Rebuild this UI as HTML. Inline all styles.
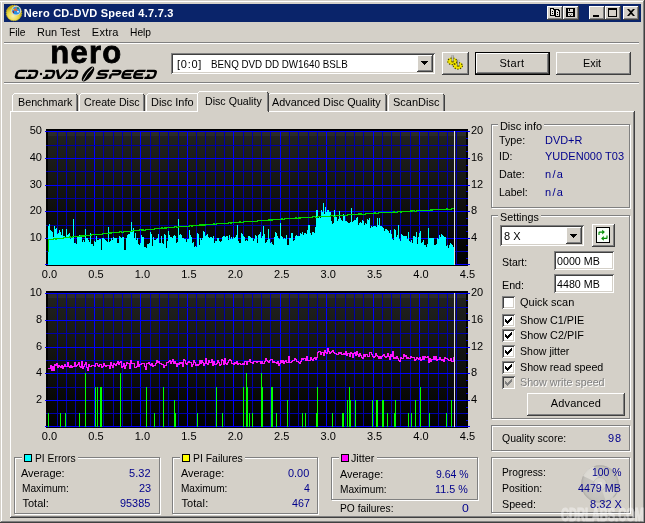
<!DOCTYPE html>
<html><head><meta charset="utf-8"><title>Nero CD-DVD Speed 4.7.7.3</title>
<style>
html,body{margin:0;padding:0;background:#d4d0c8;overflow:hidden}
#w{position:relative;width:645px;height:523px;overflow:hidden;will-change:transform;font-family:"Liberation Sans",sans-serif;font-size:11px;line-height:13px}
#w div,#w span.t,#w svg{position:absolute}
#w span.t{white-space:nowrap;line-height:13px}
</style></head><body><div id="w">
<div style="left:0px;top:0px;width:645px;height:523px;background:#d4d0c8;"></div>
<div style="left:0px;top:1px;width:644px;height:1px;background:#fff;"></div>
<div style="left:1px;top:1px;width:1px;height:521px;background:#fff;"></div>
<div style="left:643px;top:1px;width:1px;height:521px;background:#808080;"></div>
<div style="left:1px;top:521px;width:643px;height:1px;background:#808080;"></div>
<div style="left:644px;top:0px;width:1px;height:523px;background:#404040;"></div>
<div style="left:0px;top:522px;width:645px;height:1px;background:#404040;"></div>
<div style="left:4px;top:4px;width:637px;height:18px;background:#0a246a;"></div>
<svg style="left:5px;top:4px" width="19" height="18" viewBox="5 4 19 18">
<defs><radialGradient id="ig" cx="13" cy="16" r="9" gradientUnits="userSpaceOnUse"><stop offset="0" stop-color="#f8f0b0"/><stop offset=".55" stop-color="#ecdc50"/><stop offset="1" stop-color="#c4ae10"/></radialGradient></defs>
<circle cx="14" cy="13" r="7.700" fill="url(#ig)" stroke="#d8c420" stroke-width="1" stroke-dasharray="1.400 1"/>
<circle cx="16.200" cy="10.600" r="4.900" fill="#d4d4dc"/>
<circle cx="16.200" cy="10.600" r="3.900" fill="#2890e0"/>
<path d="M13.500 9.500l1.500-.5.800-1.800 1 .3-.3 1.800 1.500 1.500-.8.800-1.600-1.200-1.500.6z" fill="#f06030"/>
<path d="M17.200 7.200l1.800.6-.4 1.200-1.600-.6z" fill="#208030"/>
<path d="M13 10.500l1.200 1.800-.7.900-1-1.400z" fill="#a01010"/>
<circle cx="13.300" cy="9.200" r=".7" fill="#f0e020"/>
<circle cx="18" cy="11.700" r=".9" fill="#f4f8ff"/>
</svg>
<span class="t" style="top:6.7px;color:#fff;font-size:11px;font-weight:bold;letter-spacing:0.25px;left:23.8px;">Nero CD-DVD Speed 4.7.7.3</span>
<div style="left:547px;top:6px;width:16px;height:14px;background:#d4d0c8;box-shadow:inset -1px -1px 0 #404040, inset 1px 1px 0 #fff, inset -2px -2px 0 #808080, inset 2px 2px 0 #d4d0c8;"></div>
<svg style="left:547px;top:6px" width="16" height="14" viewBox="0 0 16 14" shape-rendering="crispEdges"><path d="M3 2h4v1h1v7h-5z" fill="#000"/><path d="M4 3h2v1h1v5h-3z" fill="#e8e6e0"/><path d="M8 3h4v1h1v7h-5z" fill="#000"/><path d="M9 4h2v1h1v5h-3z" fill="#e8e6e0"/><path d="M5 5h1v1h-1zM5 7h1v1h-1zM10 6h1v1h-1zM10 8h1v1h-1z" fill="#000"/></svg>
<div style="left:563px;top:6px;width:16px;height:14px;background:#d4d0c8;box-shadow:inset -1px -1px 0 #404040, inset 1px 1px 0 #fff, inset -2px -2px 0 #808080, inset 2px 2px 0 #d4d0c8;"></div>
<svg style="left:563px;top:6px" width="16" height="14" viewBox="0 0 16 14" shape-rendering="crispEdges"><path d="M3 2h9v9h-9z" fill="#000"/><path d="M5 3h5v3h-5z" fill="#dcdad4"/><path d="M6 3h1v2h-1z" fill="#000"/><path d="M5 7h5v3h-5z" fill="#dcdad4"/><path d="M6 8h1v1h-1zM8 8h1v1h-1z" fill="#707070"/><path d="M7 9h1v1h-1z" fill="#303030"/></svg>
<div style="left:589px;top:6px;width:16px;height:14px;background:#d4d0c8;box-shadow:inset -1px -1px 0 #404040, inset 1px 1px 0 #fff, inset -2px -2px 0 #808080, inset 2px 2px 0 #d4d0c8;"></div>
<svg style="left:589px;top:6px" width="16" height="14" viewBox="0 0 16 14" shape-rendering="crispEdges"><path d="M4 9h6v2h-6z" fill="#000"/></svg>
<div style="left:605px;top:6px;width:16px;height:14px;background:#d4d0c8;box-shadow:inset -1px -1px 0 #404040, inset 1px 1px 0 #fff, inset -2px -2px 0 #808080, inset 2px 2px 0 #d4d0c8;"></div>
<svg style="left:605px;top:6px" width="16" height="14" viewBox="0 0 16 14" shape-rendering="crispEdges"><path d="M3 2h9v9h-9z" fill="#000"/><path d="M4 4h7v6h-7z" fill="#d4d0c8"/></svg>
<div style="left:623px;top:6px;width:16px;height:14px;background:#d4d0c8;box-shadow:inset -1px -1px 0 #404040, inset 1px 1px 0 #fff, inset -2px -2px 0 #808080, inset 2px 2px 0 #d4d0c8;"></div>
<svg style="left:623px;top:6px" width="16" height="14" viewBox="0 0 16 14" shape-rendering="crispEdges"><path d="M4 3h2l2 2 2-2h2l-3 3.5 3 3.5h-2l-2-2-2 2h-2l3-3.5z" fill="#000" shape-rendering="auto"/></svg>
<span class="t" style="top:25.7px;color:#000;font-size:11px;left:9.4px;transform:scaleX(0.933);transform-origin:0 0;">File</span>
<span class="t" style="top:25.7px;color:#000;font-size:11px;left:37.4px;transform:scaleX(0.994);transform-origin:0 0;">Run Test</span>
<span class="t" style="top:25.7px;color:#000;font-size:11px;letter-spacing:0.25px;left:91.8px;">Extra</span>
<span class="t" style="top:25.7px;color:#000;font-size:11px;left:130.3px;transform:scaleX(0.929);transform-origin:0 0;">Help</span>
<div style="left:4px;top:42px;width:635px;height:1px;background:#808080;"></div>
<div style="left:4px;top:43px;width:635px;height:1px;background:#fff;"></div>
<div style="left:4px;top:82px;width:635px;height:1px;background:#808080;"></div>
<div style="left:4px;top:83px;width:635px;height:1px;background:#fff;"></div>
<span class="t" style="left:50.200px;top:35px;font-size:31px;font-weight:bold;letter-spacing:1.300px;line-height:36px;color:#000;-webkit-text-stroke:.8px #000">nero</span>
<svg style="left:10px;top:66px" width="155" height="18" viewBox="10 66 155 18"><g fill="none" stroke="#000" stroke-width="2.350"><path transform="translate(17.0 69.800) skewX(-18) scale(1.060 1)" d="M10 1H3.500Q1 1 1 3.500V5.500Q1 8 3.500 8H10"/><path transform="translate(28.5 69.800) skewX(-18) scale(1.060 1)" d="M0 1H6.500Q9 1 9 3.500V5.500Q9 8 6.500 8H0M3 4.500V8"/><path transform="translate(45.5 69.800) skewX(-18) scale(1.060 1)" d="M0 1H6.500Q9 1 9 3.500V5.500Q9 8 6.500 8H0M3 4.500V8"/><path transform="translate(56.7 69.800) skewX(-18) scale(1.060 1)" d="M0.500 0L4.500 8H6L10 0"/><path transform="translate(68.5 69.800) skewX(-18) scale(1.060 1)" d="M0 1H6.500Q9 1 9 3.500V5.500Q9 8 6.500 8H0M3 4.500V8"/><path transform="translate(98.7 69.800) skewX(-18) scale(1.060 1)" d="M10 1H3Q1 1 1 2.800Q1 4.500 3 4.500H7Q9 4.500 9 6.200Q9 8 7 8H0"/><path transform="translate(111.5 69.800) skewX(-18) scale(1.060 1)" d="M1 9V4.500M1 1H7Q9 1 9 2.800Q9 4.500 7 4.500H1"/><path transform="translate(123.5 69.800) skewX(-18) scale(1.060 1)" d="M10 1H3.500Q1 1 1 3.500V5.500Q1 8 3.500 8H10M1 4.500H8.500"/><path transform="translate(135.2 69.800) skewX(-18) scale(1.060 1)" d="M10 1H3.500Q1 1 1 3.500V5.500Q1 8 3.500 8H10M1 4.500H8.500"/><path transform="translate(147.1 69.800) skewX(-18) scale(1.060 1)" d="M0 1H6.500Q9 1 9 3.500V5.500Q9 8 6.500 8H0M3 4.500V8"/></g><circle cx="41" cy="74" r="1.200" fill="#000"/><g transform="translate(88 74) rotate(-52)"><ellipse cx="0" cy="0" rx="9" ry="3.600" fill="#000"/><path d="M-8 0.300Q0 -1.200 8 0" stroke="#d4d0c8" stroke-width="1" fill="none"/></g></svg>
<div style="left:171px;top:53px;width:264px;height:21px;background:#fff;box-shadow:inset 1px 1px 0 #808080, inset -1px -1px 0 #fff, inset 2px 2px 0 #404040, inset -2px -2px 0 #d4d0c8;"></div>
<span class="t" style="top:57.7px;color:#000;font-size:11px;letter-spacing:0.72px;left:177.1px;">[0:0]</span>
<span class="t" style="top:57.7px;color:#000;font-size:11px;left:210.5px;transform:scaleX(0.891);transform-origin:0 0;">BENQ DVD DD DW1640 BSLB</span>
<div style="left:417px;top:55px;width:16px;height:17px;background:#d4d0c8;box-shadow:inset -1px -1px 0 #404040, inset 1px 1px 0 #fff, inset -2px -2px 0 #808080, inset 2px 2px 0 #d4d0c8;"></div>
<svg style="left:417px;top:55px" width="16" height="17" viewBox="0 0 16 17" shape-rendering="crispEdges"><path d="M4 6h7v1h-1v1h-1v1h-1v1h-1v-1h-1v-1h-1v-1h-1z" fill="#000"/></svg>
<div style="left:442px;top:52px;width:27px;height:23px;background:#d4d0c8;box-shadow:inset -1px -1px 0 #404040, inset 1px 1px 0 #fff, inset -2px -2px 0 #808080, inset 2px 2px 0 #d4d0c8;"></div>
<svg style="left:444px;top:53px" width="23" height="20" viewBox="444 53 23 20">
<g fill="#f4e800"><ellipse cx="452.300" cy="61.200" rx="4.900" ry="3.700"/><ellipse cx="457.900" cy="65.600" rx="4.900" ry="3.700"/></g>
<g fill="none" stroke="#4a4400" stroke-width="1.300" stroke-dasharray="1.200 1.500"><ellipse cx="452.300" cy="61.400" rx="4.500" ry="3.300"/><ellipse cx="457.900" cy="65.800" rx="4.500" ry="3.300"/></g>
<g fill="#8a7c00"><ellipse cx="452.600" cy="61.600" rx="1.700" ry="1.100"/><ellipse cx="458.200" cy="66" rx="1.700" ry="1.100"/></g>
<rect x="451.600" y="55.300" width="2" height="5.800" fill="#707070"/><rect x="452.300" y="55.300" width=".8" height="5.500" fill="#e0e0e0"/>
<rect x="457.200" y="59.800" width="2" height="5.800" fill="#707070"/><rect x="457.900" y="59.800" width=".8" height="5.500" fill="#e0e0e0"/>
</svg>
<div style="left:475px;top:52px;width:75px;height:23px;background:#000;"></div>
<div style="left:476px;top:53px;width:73px;height:21px;background:#d4d0c8;box-shadow:inset -1px -1px 0 #404040, inset 1px 1px 0 #fff, inset -2px -2px 0 #808080, inset 2px 2px 0 #d4d0c8;"></div>
<span class="t" style="top:56.7px;color:#000;font-size:11px;letter-spacing:0.36px;left:499.4px;">Start</span>
<div style="left:556px;top:52px;width:75px;height:23px;background:#d4d0c8;box-shadow:inset -1px -1px 0 #404040, inset 1px 1px 0 #fff, inset -2px -2px 0 #808080, inset 2px 2px 0 #d4d0c8;"></div>
<span class="t" style="top:56.7px;color:#000;font-size:11px;left:583.1px;transform:scaleX(0.986);transform-origin:0 0;">Exit</span>
<div style="left:10px;top:111px;width:624px;height:1px;background:#fff;"></div>
<div style="left:10px;top:111px;width:1px;height:406px;background:#fff;"></div>
<div style="left:634px;top:111px;width:1px;height:407px;background:#404040;"></div>
<div style="left:10px;top:517px;width:625px;height:1px;background:#404040;"></div>
<div style="left:633px;top:112px;width:1px;height:405px;background:#808080;"></div>
<div style="left:11px;top:516px;width:623px;height:1px;background:#808080;"></div>
<div style="left:12px;top:95px;width:1px;height:16px;background:#fff;"></div>
<div style="left:13px;top:94px;width:1px;height:1px;background:#fff;"></div>
<div style="left:14px;top:93px;width:62px;height:1px;background:#fff;"></div>
<div style="left:77px;top:95px;width:1px;height:16px;background:#404040;"></div>
<div style="left:76px;top:94px;width:1px;height:1px;background:#404040;"></div>
<div style="left:76px;top:95px;width:1px;height:16px;background:#808080;"></div>
<span class="t" style="top:95.7px;color:#000;font-size:11px;left:18.1px;transform:scaleX(0.977);transform-origin:0 0;">Benchmark</span>
<div style="left:79px;top:95px;width:1px;height:16px;background:#fff;"></div>
<div style="left:80px;top:94px;width:1px;height:1px;background:#fff;"></div>
<div style="left:81px;top:93px;width:62px;height:1px;background:#fff;"></div>
<div style="left:144px;top:95px;width:1px;height:16px;background:#404040;"></div>
<div style="left:143px;top:94px;width:1px;height:1px;background:#404040;"></div>
<div style="left:143px;top:95px;width:1px;height:16px;background:#808080;"></div>
<span class="t" style="top:95.7px;color:#000;font-size:11px;left:83.9px;transform:scaleX(0.967);transform-origin:0 0;">Create Disc</span>
<div style="left:146px;top:95px;width:1px;height:16px;background:#fff;"></div>
<div style="left:147px;top:94px;width:1px;height:1px;background:#fff;"></div>
<div style="left:148px;top:93px;width:50px;height:1px;background:#fff;"></div>
<div style="left:199px;top:95px;width:1px;height:16px;background:#404040;"></div>
<div style="left:198px;top:94px;width:1px;height:1px;background:#404040;"></div>
<div style="left:198px;top:95px;width:1px;height:16px;background:#808080;"></div>
<span class="t" style="top:95.7px;color:#000;font-size:11px;left:150.9px;transform:scaleX(0.995);transform-origin:0 0;">Disc Info</span>
<div style="left:268px;top:95px;width:1px;height:16px;background:#fff;"></div>
<div style="left:269px;top:94px;width:1px;height:1px;background:#fff;"></div>
<div style="left:270px;top:93px;width:115px;height:1px;background:#fff;"></div>
<div style="left:386px;top:95px;width:1px;height:16px;background:#404040;"></div>
<div style="left:385px;top:94px;width:1px;height:1px;background:#404040;"></div>
<div style="left:385px;top:95px;width:1px;height:16px;background:#808080;"></div>
<span class="t" style="top:95.7px;color:#000;font-size:11px;left:272.4px;transform:scaleX(0.983);transform-origin:0 0;">Advanced Disc Quality</span>
<div style="left:388px;top:95px;width:1px;height:16px;background:#fff;"></div>
<div style="left:389px;top:94px;width:1px;height:1px;background:#fff;"></div>
<div style="left:390px;top:93px;width:53px;height:1px;background:#fff;"></div>
<div style="left:444px;top:95px;width:1px;height:16px;background:#404040;"></div>
<div style="left:443px;top:94px;width:1px;height:1px;background:#404040;"></div>
<div style="left:443px;top:95px;width:1px;height:16px;background:#808080;"></div>
<span class="t" style="top:95.7px;color:#000;font-size:11px;left:393.2px;transform:scaleX(0.998);transform-origin:0 0;">ScanDisc</span>
<div style="left:197px;top:91px;width:72px;height:21px;background:#d4d0c8;"></div>
<div style="left:197px;top:93px;width:1px;height:19px;background:#fff;"></div>
<div style="left:198px;top:92px;width:1px;height:1px;background:#fff;"></div>
<div style="left:199px;top:91px;width:68px;height:1px;background:#fff;"></div>
<div style="left:268px;top:93px;width:1px;height:19px;background:#404040;"></div>
<div style="left:267px;top:92px;width:1px;height:1px;background:#404040;"></div>
<div style="left:267px;top:93px;width:1px;height:18px;background:#808080;"></div>
<span class="t" style="top:94.7px;color:#000;font-size:11px;left:204.9px;transform:scaleX(0.967);transform-origin:0 0;">Disc Quality</span>
<svg style="left:0;top:0" width="645" height="523" viewBox="0 0 645 523"><defs><linearGradient id="g131" x1="0" y1="0" x2="0" y2="1"><stop offset="0" stop-color="#222320"/><stop offset="1" stop-color="#000"/></linearGradient></defs><rect x="46" y="129" width="422" height="137" fill="#000" shape-rendering="crispEdges"/><rect x="48" y="131" width="418" height="134" fill="url(#g131)" shape-rendering="crispEdges"/><rect x="48" y="132" width="418" height="4" fill="#2b2b2a" shape-rendering="crispEdges"/><g shape-rendering="crispEdges"><rect x="57" y="131" width="1" height="134" fill="#0000a8"/><rect x="66" y="131" width="1" height="134" fill="#0000a8"/><rect x="75" y="131" width="1" height="134" fill="#0000a8"/><rect x="85" y="131" width="1" height="134" fill="#0000a8"/><rect x="94" y="131" width="1" height="134" fill="#0000ff"/><rect x="103" y="131" width="1" height="134" fill="#0000a8"/><rect x="113" y="131" width="1" height="134" fill="#0000a8"/><rect x="122" y="131" width="1" height="134" fill="#0000a8"/><rect x="131" y="131" width="1" height="134" fill="#0000a8"/><rect x="140" y="131" width="1" height="134" fill="#0000ff"/><rect x="150" y="131" width="1" height="134" fill="#0000a8"/><rect x="159" y="131" width="1" height="134" fill="#0000a8"/><rect x="168" y="131" width="1" height="134" fill="#0000a8"/><rect x="178" y="131" width="1" height="134" fill="#0000a8"/><rect x="187" y="131" width="1" height="134" fill="#0000ff"/><rect x="196" y="131" width="1" height="134" fill="#0000a8"/><rect x="205" y="131" width="1" height="134" fill="#0000a8"/><rect x="215" y="131" width="1" height="134" fill="#0000a8"/><rect x="224" y="131" width="1" height="134" fill="#0000a8"/><rect x="233" y="131" width="1" height="134" fill="#0000ff"/><rect x="243" y="131" width="1" height="134" fill="#0000a8"/><rect x="252" y="131" width="1" height="134" fill="#0000a8"/><rect x="261" y="131" width="1" height="134" fill="#0000a8"/><rect x="270" y="131" width="1" height="134" fill="#0000a8"/><rect x="280" y="131" width="1" height="134" fill="#0000ff"/><rect x="289" y="131" width="1" height="134" fill="#0000a8"/><rect x="298" y="131" width="1" height="134" fill="#0000a8"/><rect x="308" y="131" width="1" height="134" fill="#0000a8"/><rect x="317" y="131" width="1" height="134" fill="#0000a8"/><rect x="326" y="131" width="1" height="134" fill="#0000ff"/><rect x="335" y="131" width="1" height="134" fill="#0000a8"/><rect x="345" y="131" width="1" height="134" fill="#0000a8"/><rect x="354" y="131" width="1" height="134" fill="#0000a8"/><rect x="363" y="131" width="1" height="134" fill="#0000a8"/><rect x="373" y="131" width="1" height="134" fill="#0000ff"/><rect x="382" y="131" width="1" height="134" fill="#0000a8"/><rect x="391" y="131" width="1" height="134" fill="#0000a8"/><rect x="400" y="131" width="1" height="134" fill="#0000a8"/><rect x="410" y="131" width="1" height="134" fill="#0000a8"/><rect x="419" y="131" width="1" height="134" fill="#0000ff"/><rect x="428" y="131" width="1" height="134" fill="#0000a8"/><rect x="438" y="131" width="1" height="134" fill="#0000a8"/><rect x="447" y="131" width="1" height="134" fill="#0000a8"/><rect x="456" y="131" width="1" height="134" fill="#0000a8"/><rect x="45" y="131" width="425" height="1" fill="#0000ff"/><rect x="46" y="145" width="421" height="1" fill="#0000a8"/><rect x="45" y="158" width="425" height="1" fill="#0000ff"/><rect x="46" y="171" width="421" height="1" fill="#0000a8"/><rect x="45" y="185" width="425" height="1" fill="#0000ff"/><rect x="46" y="198" width="421" height="1" fill="#0000a8"/><rect x="45" y="211" width="425" height="1" fill="#0000ff"/><rect x="46" y="225" width="421" height="1" fill="#0000a8"/><rect x="45" y="238" width="425" height="1" fill="#0000ff"/><rect x="46" y="251" width="421" height="1" fill="#0000a8"/><rect x="45" y="264" width="425" height="1" fill="#0000ff"/><rect x="466" y="131" width="2" height="1" fill="#0000e0"/><rect x="466" y="138" width="2" height="1" fill="#0000e0"/><rect x="466" y="145" width="2" height="1" fill="#0000e0"/><rect x="466" y="151" width="2" height="1" fill="#0000e0"/><rect x="466" y="158" width="2" height="1" fill="#0000e0"/><rect x="466" y="165" width="2" height="1" fill="#0000e0"/><rect x="466" y="171" width="2" height="1" fill="#0000e0"/><rect x="466" y="178" width="2" height="1" fill="#0000e0"/><rect x="466" y="185" width="2" height="1" fill="#0000e0"/><rect x="466" y="191" width="2" height="1" fill="#0000e0"/><rect x="466" y="198" width="2" height="1" fill="#0000e0"/><rect x="466" y="205" width="2" height="1" fill="#0000e0"/><rect x="466" y="211" width="2" height="1" fill="#0000e0"/><rect x="466" y="218" width="2" height="1" fill="#0000e0"/><rect x="466" y="225" width="2" height="1" fill="#0000e0"/><rect x="466" y="231" width="2" height="1" fill="#0000e0"/><rect x="466" y="238" width="2" height="1" fill="#0000e0"/><rect x="466" y="245" width="2" height="1" fill="#0000e0"/><rect x="466" y="251" width="2" height="1" fill="#0000e0"/><rect x="466" y="258" width="2" height="1" fill="#0000e0"/><rect x="466" y="264" width="2" height="1" fill="#0000e0"/></g><path d="M48 265V225.8h1V224.3h1V230.1h1V230.8h1V232.0h1V237.3h1V226.4h1V228.6h1V228.0h1V234.2h1V233.4h1V230.3h1V231.6h1V234.5h1V229.2h1V235.7h1V235.9h1V237.3h1V229.3h1V234.5h1V233.8h1V232.8h1V238.8h1V236.5h1V235.8h1V218.8h1V243.1h1V243.4h1V244.3h1V236.2h1V236.1h1V234.8h1V235.5h1V235.8h1V242.1h1V240.4h1V241.5h1V229.1h1V237.5h1V238.1h1V239.8h1V241.7h1V232.6h1V243.7h1V244.4h1V246.4h1V241.0h1V242.0h1V235.8h1V239.5h1V240.3h1V239.1h1V239.3h1V249.9h1V237.8h1V238.1h1V238.9h1V239.6h1V240.8h1V242.3h1V227.4h1V241.6h1V240.7h1V238.4h1V239.8h1V237.4h1V238.4h1V238.2h1V238.1h1V243.0h1V243.1h1V236.3h1V237.1h1V238.4h1V237.3h1V236.6h1V250.3h1V250.3h1V237.8h1V235.2h1V234.2h1V234.3h1V231.3h1V222.3h1V230.9h1V227.8h1V238.0h1V233.4h1V240.0h1V237.7h1V243.6h1V245.0h1V243.1h1V234.6h1V236.9h1V236.6h1V247.1h1V247.4h1V247.9h1V243.6h1V244.1h1V243.0h1V232.1h1V233.5h1V245.8h1V236.8h1V240.4h1V240.0h1V238.6h1V237.9h1V234.2h1V242.5h1V243.4h1V235.7h1V243.2h1V244.2h1V234.3h1V235.3h1V247.6h1V241.3h1V231.3h1V235.4h1V237.1h1V237.1h1V237.5h1V235.6h1V235.4h1V235.9h1V242.7h1V242.0h1V218.8h1V235.1h1V234.0h1V235.0h1V237.6h1V237.7h1V238.7h1V239.1h1V241.5h1V239.1h1V238.5h1V230.0h1V235.1h1V237.2h1V242.6h1V242.1h1V247.3h1V245.7h1V246.5h1V233.3h1V233.5h1V244.8h1V238.1h1V240.4h1V237.6h1V231.0h1V231.9h1V236.0h1V235.2h1V233.9h1V237.2h1V237.9h1V236.6h1V236.8h1V237.7h1V235.5h1V242.7h1V240.9h1V241.4h1V238.3h1V237.8h1V241.1h1V242.2h1V240.9h1V237.4h1V236.4h1V236.2h1V237.4h1V235.7h1V236.1h1V239.5h1V235.1h1V239.4h1V237.4h1V238.5h1V236.5h1V238.4h1V237.3h1V235.2h1V224.7h1V241.3h1V242.8h1V243.4h1V233.4h1V233.9h1V236.4h1V237.0h1V241.2h1V240.0h1V240.8h1V235.7h1V235.5h1V237.2h1V238.1h1V237.5h1V241.4h1V238.9h1V235.2h1V235.8h1V242.5h1V235.0h1V233.8h1V231.9h1V238.1h1V235.6h1V226.1h1V233.9h1V243.0h1V241.8h1V240.0h1V228.8h1V238.5h1V243.2h1V241.7h1V244.1h1V244.5h1V237.2h1V232.3h1V233.0h1V235.8h1V237.9h1V238.5h1V223.3h1V236.1h1V237.0h1V238.9h1V238.1h1V238.5h1V235.3h1V244.5h1V245.1h1V237.6h1V238.0h1V233.3h1V233.1h1V240.9h1V240.1h1V236.0h1V235.2h1V236.3h1V236.2h1V236.0h1V233.2h1V233.7h1V232.2h1V235.3h1V232.9h1V232.7h1V234.2h1V229.7h1V225.4h1V225.1h1V233.1h1V234.7h1V232.0h1V231.9h1V233.4h1V227.2h1V209.7h1V209.5h1V218.0h1V215.5h1V218.0h1V210.0h1V211.6h1V202.8h1V213.6h1V207.0h1V211.5h1V209.5h1V210.3h1V212.1h1V212.4h1V221.1h1V223.9h1V223.1h1V209.5h1V216.0h1V216.8h1V220.7h1V219.3h1V210.9h1V218.4h1V219.5h1V220.9h1V214.2h1V214.8h1V220.7h1V221.4h1V221.7h1V223.0h1V222.8h1V221.6h1V208.1h1V222.2h1V220.8h1V220.0h1V220.2h1V217.9h1V217.4h1V224.6h1V223.0h1V222.2h1V223.3h1V220.1h1V221.1h1V224.6h1V223.3h1V224.1h1V219.2h1V219.7h1V218.4h1V227.5h1V226.2h1V227.4h1V226.4h1V226.3h1V225.9h1V227.2h1V218.0h1V225.0h1V218.2h1V225.7h1V226.4h1V226.8h1V228.1h1V231.2h1V228.8h1V229.1h1V230.0h1V231.4h1V233.4h1V229.7h1V234.2h1V239.4h1V240.4h1V229.4h1V229.5h1V237.1h1V235.4h1V224.5h1V239.2h1V240.8h1V234.1h1V235.1h1V235.7h1V235.6h1V236.4h1V236.3h1V238.6h1V232.2h1V241.3h1V241.8h1V240.0h1V242.5h1V236.3h1V236.1h1V237.2h1V232.1h1V243.7h1V236.7h1V232.9h1V231.4h1V242.6h1V241.5h1V239.9h1V244.7h1V244.8h1V246.8h1V243.7h1V227.7h1V238.3h1V237.5h1V237.5h1V237.5h1V238.0h1V244.5h1V245.4h1V244.1h1V238.3h1V238.8h1V234.7h1V236.8h1V233.9h1V234.8h1V236.4h1V236.5h1V236.8h1V245.7h1V245.1h1V248.0h1V244.5h1V243.2h1V243.9h1V244.8h1V247.2h1V248.3h1V265z" fill="#00ffff" shape-rendering="crispEdges"/><rect x="48" y="240" width="1" height="12" fill="#00d800" shape-rendering="crispEdges"/><g shape-rendering="crispEdges" fill="#00d800"><rect x="48" y="239" width="1" height="1"/><rect x="49" y="239" width="1" height="1"/><rect x="50" y="239" width="1" height="1"/><rect x="51" y="239" width="1" height="1"/><rect x="52" y="239" width="1" height="1"/><rect x="53" y="238" width="1" height="2"/><rect x="54" y="238" width="1" height="1"/><rect x="55" y="238" width="1" height="2"/><rect x="56" y="238" width="1" height="2"/><rect x="57" y="238" width="1" height="1"/><rect x="58" y="238" width="1" height="1"/><rect x="59" y="238" width="1" height="1"/><rect x="60" y="238" width="1" height="1"/><rect x="61" y="238" width="1" height="1"/><rect x="62" y="238" width="1" height="1"/><rect x="63" y="237" width="1" height="2"/><rect x="64" y="237" width="1" height="1"/><rect x="65" y="237" width="1" height="1"/><rect x="66" y="237" width="1" height="1"/><rect x="67" y="237" width="1" height="1"/><rect x="68" y="237" width="1" height="1"/><rect x="69" y="236" width="1" height="2"/><rect x="70" y="236" width="1" height="2"/><rect x="71" y="237" width="1" height="1"/><rect x="72" y="236" width="1" height="2"/><rect x="73" y="236" width="1" height="1"/><rect x="74" y="236" width="1" height="1"/><rect x="75" y="236" width="1" height="1"/><rect x="76" y="236" width="1" height="1"/><rect x="77" y="236" width="1" height="1"/><rect x="78" y="236" width="1" height="1"/><rect x="79" y="236" width="1" height="1"/><rect x="80" y="235" width="1" height="2"/><rect x="81" y="235" width="1" height="2"/><rect x="82" y="235" width="1" height="2"/><rect x="83" y="235" width="1" height="2"/><rect x="84" y="235" width="1" height="2"/><rect x="85" y="235" width="1" height="1"/><rect x="86" y="235" width="1" height="1"/><rect x="87" y="235" width="1" height="1"/><rect x="88" y="235" width="1" height="1"/><rect x="89" y="235" width="1" height="1"/><rect x="90" y="235" width="1" height="1"/><rect x="91" y="234" width="1" height="2"/><rect x="92" y="234" width="1" height="1"/><rect x="93" y="234" width="1" height="1"/><rect x="94" y="234" width="1" height="1"/><rect x="95" y="234" width="1" height="1"/><rect x="96" y="234" width="1" height="1"/><rect x="97" y="234" width="1" height="1"/><rect x="98" y="234" width="1" height="1"/><rect x="99" y="234" width="1" height="1"/><rect x="100" y="234" width="1" height="1"/><rect x="101" y="234" width="1" height="1"/><rect x="102" y="233" width="1" height="2"/><rect x="103" y="233" width="1" height="1"/><rect x="104" y="233" width="1" height="1"/><rect x="105" y="233" width="1" height="1"/><rect x="106" y="233" width="1" height="1"/><rect x="107" y="233" width="1" height="1"/><rect x="108" y="233" width="1" height="1"/><rect x="109" y="232" width="1" height="2"/><rect x="110" y="232" width="1" height="2"/><rect x="111" y="232" width="1" height="2"/><rect x="112" y="232" width="1" height="1"/><rect x="113" y="232" width="1" height="1"/><rect x="114" y="232" width="1" height="1"/><rect x="115" y="232" width="1" height="1"/><rect x="116" y="232" width="1" height="1"/><rect x="117" y="232" width="1" height="1"/><rect x="118" y="232" width="1" height="1"/><rect x="119" y="231" width="1" height="2"/><rect x="120" y="231" width="1" height="1"/><rect x="121" y="231" width="1" height="2"/><rect x="122" y="232" width="1" height="1"/><rect x="123" y="231" width="1" height="2"/><rect x="124" y="231" width="1" height="1"/><rect x="125" y="231" width="1" height="1"/><rect x="126" y="231" width="1" height="1"/><rect x="127" y="231" width="1" height="1"/><rect x="128" y="231" width="1" height="1"/><rect x="129" y="231" width="1" height="1"/><rect x="130" y="231" width="1" height="1"/><rect x="131" y="231" width="1" height="1"/><rect x="132" y="230" width="1" height="2"/><rect x="133" y="230" width="1" height="1"/><rect x="134" y="230" width="1" height="1"/><rect x="135" y="230" width="1" height="1"/><rect x="136" y="230" width="1" height="1"/><rect x="137" y="230" width="1" height="1"/><rect x="138" y="230" width="1" height="1"/><rect x="139" y="229" width="1" height="2"/><rect x="140" y="229" width="1" height="1"/><rect x="141" y="229" width="1" height="2"/><rect x="142" y="229" width="1" height="2"/><rect x="143" y="229" width="1" height="2"/><rect x="144" y="230" width="1" height="1"/><rect x="145" y="229" width="1" height="2"/><rect x="146" y="229" width="1" height="1"/><rect x="147" y="229" width="1" height="1"/><rect x="148" y="229" width="1" height="1"/><rect x="149" y="229" width="1" height="1"/><rect x="150" y="229" width="1" height="1"/><rect x="151" y="229" width="1" height="1"/><rect x="152" y="229" width="1" height="1"/><rect x="153" y="229" width="1" height="1"/><rect x="154" y="228" width="1" height="2"/><rect x="155" y="228" width="1" height="1"/><rect x="156" y="228" width="1" height="1"/><rect x="157" y="228" width="1" height="1"/><rect x="158" y="228" width="1" height="1"/><rect x="159" y="228" width="1" height="1"/><rect x="160" y="228" width="1" height="1"/><rect x="161" y="227" width="1" height="2"/><rect x="162" y="227" width="1" height="2"/><rect x="163" y="228" width="1" height="1"/><rect x="164" y="227" width="1" height="2"/><rect x="165" y="227" width="1" height="2"/><rect x="166" y="227" width="1" height="2"/><rect x="167" y="227" width="1" height="1"/><rect x="168" y="227" width="1" height="1"/><rect x="169" y="227" width="1" height="1"/><rect x="170" y="227" width="1" height="1"/><rect x="171" y="227" width="1" height="1"/><rect x="172" y="227" width="1" height="1"/><rect x="173" y="227" width="1" height="1"/><rect x="174" y="226" width="1" height="2"/><rect x="175" y="226" width="1" height="1"/><rect x="176" y="226" width="1" height="2"/><rect x="177" y="227" width="1" height="1"/><rect x="178" y="226" width="1" height="2"/><rect x="179" y="226" width="1" height="1"/><rect x="180" y="226" width="1" height="1"/><rect x="181" y="226" width="1" height="1"/><rect x="182" y="226" width="1" height="1"/><rect x="183" y="226" width="1" height="1"/><rect x="184" y="226" width="1" height="1"/><rect x="185" y="226" width="1" height="1"/><rect x="186" y="226" width="1" height="1"/><rect x="187" y="226" width="1" height="1"/><rect x="188" y="226" width="1" height="1"/><rect x="189" y="225" width="1" height="2"/><rect x="190" y="225" width="1" height="1"/><rect x="191" y="225" width="1" height="2"/><rect x="192" y="225" width="1" height="2"/><rect x="193" y="225" width="1" height="1"/><rect x="194" y="225" width="1" height="1"/><rect x="195" y="225" width="1" height="1"/><rect x="196" y="225" width="1" height="1"/><rect x="197" y="225" width="1" height="1"/><rect x="198" y="225" width="1" height="1"/><rect x="199" y="224" width="1" height="2"/><rect x="200" y="224" width="1" height="2"/><rect x="201" y="224" width="1" height="2"/><rect x="202" y="224" width="1" height="2"/><rect x="203" y="224" width="1" height="2"/><rect x="204" y="224" width="1" height="2"/><rect x="205" y="224" width="1" height="2"/><rect x="206" y="224" width="1" height="1"/><rect x="207" y="224" width="1" height="1"/><rect x="208" y="224" width="1" height="1"/><rect x="209" y="224" width="1" height="1"/><rect x="210" y="224" width="1" height="1"/><rect x="211" y="224" width="1" height="1"/><rect x="212" y="224" width="1" height="1"/><rect x="213" y="223" width="1" height="2"/><rect x="214" y="223" width="1" height="2"/><rect x="215" y="224" width="1" height="1"/><rect x="216" y="223" width="1" height="2"/><rect x="217" y="223" width="1" height="1"/><rect x="218" y="223" width="1" height="1"/><rect x="219" y="223" width="1" height="1"/><rect x="220" y="223" width="1" height="1"/><rect x="221" y="223" width="1" height="1"/><rect x="222" y="223" width="1" height="1"/><rect x="223" y="223" width="1" height="1"/><rect x="224" y="223" width="1" height="1"/><rect x="225" y="223" width="1" height="1"/><rect x="226" y="223" width="1" height="1"/><rect x="227" y="223" width="1" height="1"/><rect x="228" y="222" width="1" height="2"/><rect x="229" y="222" width="1" height="1"/><rect x="230" y="222" width="1" height="2"/><rect x="231" y="222" width="1" height="2"/><rect x="232" y="222" width="1" height="1"/><rect x="233" y="222" width="1" height="1"/><rect x="234" y="222" width="1" height="1"/><rect x="235" y="222" width="1" height="1"/><rect x="236" y="222" width="1" height="1"/><rect x="237" y="222" width="1" height="1"/><rect x="238" y="222" width="1" height="1"/><rect x="239" y="221" width="1" height="2"/><rect x="240" y="221" width="1" height="2"/><rect x="241" y="222" width="1" height="1"/><rect x="242" y="222" width="1" height="1"/><rect x="243" y="221" width="1" height="2"/><rect x="244" y="221" width="1" height="1"/><rect x="245" y="221" width="1" height="1"/><rect x="246" y="221" width="1" height="1"/><rect x="247" y="221" width="1" height="1"/><rect x="248" y="221" width="1" height="1"/><rect x="249" y="221" width="1" height="1"/><rect x="250" y="221" width="1" height="1"/><rect x="251" y="221" width="1" height="1"/><rect x="252" y="221" width="1" height="1"/><rect x="253" y="221" width="1" height="1"/><rect x="254" y="221" width="1" height="1"/><rect x="255" y="221" width="1" height="1"/><rect x="256" y="221" width="1" height="1"/><rect x="257" y="220" width="1" height="2"/><rect x="258" y="220" width="1" height="1"/><rect x="259" y="220" width="1" height="1"/><rect x="260" y="220" width="1" height="1"/><rect x="261" y="220" width="1" height="1"/><rect x="262" y="220" width="1" height="1"/><rect x="263" y="220" width="1" height="1"/><rect x="264" y="220" width="1" height="1"/><rect x="265" y="220" width="1" height="1"/><rect x="266" y="220" width="1" height="1"/><rect x="267" y="220" width="1" height="1"/><rect x="268" y="219" width="1" height="2"/><rect x="269" y="219" width="1" height="2"/><rect x="270" y="219" width="1" height="2"/><rect x="271" y="219" width="1" height="2"/><rect x="272" y="219" width="1" height="2"/><rect x="273" y="219" width="1" height="1"/><rect x="274" y="219" width="1" height="1"/><rect x="275" y="219" width="1" height="1"/><rect x="276" y="219" width="1" height="1"/><rect x="277" y="219" width="1" height="1"/><rect x="278" y="219" width="1" height="1"/><rect x="279" y="219" width="1" height="1"/><rect x="280" y="219" width="1" height="1"/><rect x="281" y="218" width="1" height="2"/><rect x="282" y="218" width="1" height="2"/><rect x="283" y="219" width="1" height="1"/><rect x="284" y="218" width="1" height="2"/><rect x="285" y="218" width="1" height="1"/><rect x="286" y="218" width="1" height="1"/><rect x="287" y="218" width="1" height="1"/><rect x="288" y="218" width="1" height="1"/><rect x="289" y="218" width="1" height="1"/><rect x="290" y="218" width="1" height="1"/><rect x="291" y="218" width="1" height="1"/><rect x="292" y="218" width="1" height="1"/><rect x="293" y="218" width="1" height="1"/><rect x="294" y="218" width="1" height="1"/><rect x="295" y="217" width="1" height="2"/><rect x="296" y="217" width="1" height="2"/><rect x="297" y="218" width="1" height="1"/><rect x="298" y="217" width="1" height="2"/><rect x="299" y="217" width="1" height="2"/><rect x="300" y="217" width="1" height="2"/><rect x="301" y="217" width="1" height="1"/><rect x="302" y="217" width="1" height="1"/><rect x="303" y="217" width="1" height="1"/><rect x="304" y="217" width="1" height="1"/><rect x="305" y="217" width="1" height="1"/><rect x="306" y="217" width="1" height="1"/><rect x="307" y="217" width="1" height="1"/><rect x="308" y="217" width="1" height="1"/><rect x="309" y="217" width="1" height="1"/><rect x="310" y="217" width="1" height="1"/><rect x="311" y="217" width="1" height="1"/><rect x="312" y="216" width="1" height="2"/><rect x="313" y="216" width="1" height="1"/><rect x="314" y="216" width="1" height="1"/><rect x="315" y="216" width="1" height="2"/><rect x="316" y="217" width="1" height="1"/><rect x="317" y="216" width="1" height="2"/><rect x="318" y="216" width="1" height="1"/><rect x="319" y="216" width="1" height="1"/><rect x="320" y="216" width="1" height="1"/><rect x="321" y="216" width="1" height="1"/><rect x="322" y="216" width="1" height="1"/><rect x="323" y="216" width="1" height="1"/><rect x="324" y="216" width="1" height="1"/><rect x="325" y="216" width="1" height="1"/><rect x="326" y="216" width="1" height="1"/><rect x="327" y="216" width="1" height="1"/><rect x="328" y="216" width="1" height="1"/><rect x="329" y="216" width="1" height="1"/><rect x="330" y="215" width="1" height="2"/><rect x="331" y="215" width="1" height="1"/><rect x="332" y="215" width="1" height="1"/><rect x="333" y="215" width="1" height="2"/><rect x="334" y="216" width="1" height="1"/><rect x="335" y="215" width="1" height="2"/><rect x="336" y="215" width="1" height="1"/><rect x="337" y="215" width="1" height="1"/><rect x="338" y="215" width="1" height="1"/><rect x="339" y="215" width="1" height="1"/><rect x="340" y="215" width="1" height="1"/><rect x="341" y="215" width="1" height="1"/><rect x="342" y="215" width="1" height="1"/><rect x="343" y="215" width="1" height="1"/><rect x="344" y="215" width="1" height="1"/><rect x="345" y="215" width="1" height="1"/><rect x="346" y="215" width="1" height="1"/><rect x="347" y="214" width="1" height="2"/><rect x="348" y="214" width="1" height="1"/><rect x="349" y="214" width="1" height="1"/><rect x="350" y="214" width="1" height="1"/><rect x="351" y="214" width="1" height="1"/><rect x="352" y="214" width="1" height="1"/><rect x="353" y="214" width="1" height="1"/><rect x="354" y="214" width="1" height="1"/><rect x="355" y="214" width="1" height="1"/><rect x="356" y="214" width="1" height="1"/><rect x="357" y="214" width="1" height="1"/><rect x="358" y="213" width="1" height="2"/><rect x="359" y="213" width="1" height="2"/><rect x="360" y="213" width="1" height="2"/><rect x="361" y="213" width="1" height="2"/><rect x="362" y="214" width="1" height="1"/><rect x="363" y="214" width="1" height="1"/><rect x="364" y="214" width="1" height="1"/><rect x="365" y="213" width="1" height="2"/><rect x="366" y="213" width="1" height="1"/><rect x="367" y="213" width="1" height="1"/><rect x="368" y="213" width="1" height="1"/><rect x="369" y="213" width="1" height="1"/><rect x="370" y="213" width="1" height="1"/><rect x="371" y="213" width="1" height="1"/><rect x="372" y="213" width="1" height="1"/><rect x="373" y="213" width="1" height="1"/><rect x="374" y="212" width="1" height="2"/><rect x="375" y="212" width="1" height="2"/><rect x="376" y="213" width="1" height="1"/><rect x="377" y="213" width="1" height="1"/><rect x="378" y="212" width="1" height="2"/><rect x="379" y="212" width="1" height="1"/><rect x="380" y="212" width="1" height="1"/><rect x="381" y="212" width="1" height="1"/><rect x="382" y="212" width="1" height="1"/><rect x="383" y="212" width="1" height="1"/><rect x="384" y="212" width="1" height="1"/><rect x="385" y="212" width="1" height="1"/><rect x="386" y="212" width="1" height="1"/><rect x="387" y="212" width="1" height="1"/><rect x="388" y="212" width="1" height="1"/><rect x="389" y="212" width="1" height="1"/><rect x="390" y="212" width="1" height="1"/><rect x="391" y="212" width="1" height="1"/><rect x="392" y="212" width="1" height="1"/><rect x="393" y="211" width="1" height="2"/><rect x="394" y="211" width="1" height="2"/><rect x="395" y="212" width="1" height="1"/><rect x="396" y="212" width="1" height="1"/><rect x="397" y="211" width="1" height="2"/><rect x="398" y="211" width="1" height="1"/><rect x="399" y="211" width="1" height="1"/><rect x="400" y="211" width="1" height="2"/><rect x="401" y="211" width="1" height="2"/><rect x="402" y="211" width="1" height="1"/><rect x="403" y="211" width="1" height="1"/><rect x="404" y="211" width="1" height="1"/><rect x="405" y="211" width="1" height="1"/><rect x="406" y="211" width="1" height="1"/><rect x="407" y="211" width="1" height="1"/><rect x="408" y="211" width="1" height="1"/><rect x="409" y="211" width="1" height="1"/><rect x="410" y="210" width="1" height="2"/><rect x="411" y="210" width="1" height="2"/><rect x="412" y="210" width="1" height="2"/><rect x="413" y="210" width="1" height="1"/><rect x="414" y="210" width="1" height="2"/><rect x="415" y="211" width="1" height="1"/><rect x="416" y="210" width="1" height="2"/><rect x="417" y="210" width="1" height="1"/><rect x="418" y="210" width="1" height="1"/><rect x="419" y="210" width="1" height="1"/><rect x="420" y="210" width="1" height="1"/><rect x="421" y="210" width="1" height="1"/><rect x="422" y="210" width="1" height="1"/><rect x="423" y="210" width="1" height="1"/><rect x="424" y="210" width="1" height="1"/><rect x="425" y="210" width="1" height="1"/><rect x="426" y="210" width="1" height="1"/><rect x="427" y="210" width="1" height="1"/><rect x="428" y="210" width="1" height="1"/><rect x="429" y="210" width="1" height="1"/><rect x="430" y="209" width="1" height="2"/><rect x="431" y="209" width="1" height="2"/><rect x="432" y="209" width="1" height="2"/><rect x="433" y="209" width="1" height="1"/><rect x="434" y="209" width="1" height="1"/><rect x="435" y="209" width="1" height="1"/><rect x="436" y="209" width="1" height="1"/><rect x="437" y="209" width="1" height="1"/><rect x="438" y="209" width="1" height="1"/><rect x="439" y="209" width="1" height="1"/><rect x="440" y="209" width="1" height="1"/><rect x="441" y="209" width="1" height="1"/><rect x="442" y="209" width="1" height="1"/><rect x="443" y="209" width="1" height="1"/><rect x="444" y="209" width="1" height="1"/><rect x="445" y="209" width="1" height="1"/><rect x="446" y="208" width="1" height="2"/><rect x="447" y="208" width="1" height="2"/><rect x="448" y="209" width="1" height="1"/><rect x="449" y="209" width="1" height="1"/><rect x="450" y="209" width="1" height="1"/><rect x="451" y="208" width="1" height="2"/><rect x="452" y="208" width="1" height="1"/><rect x="453" y="208" width="1" height="1"/></g><rect x="454" y="131" width="1" height="134" fill="#e0e0e0" shape-rendering="crispEdges"/></svg>
<span class="t" style="top:123.7px;color:#000;font-size:11px;right:603.0px;">50</span>
<span class="t" style="top:150.7px;color:#000;font-size:11px;right:603.0px;">40</span>
<span class="t" style="top:177.7px;color:#000;font-size:11px;right:603.0px;">30</span>
<span class="t" style="top:203.7px;color:#000;font-size:11px;right:603.0px;">20</span>
<span class="t" style="top:230.7px;color:#000;font-size:11px;right:603.0px;">10</span>
<span class="t" style="top:123.7px;color:#000;font-size:11px;left:471.0px;">20</span>
<span class="t" style="top:150.7px;color:#000;font-size:11px;left:471.0px;">16</span>
<span class="t" style="top:177.7px;color:#000;font-size:11px;left:471.0px;">12</span>
<span class="t" style="top:203.7px;color:#000;font-size:11px;left:471.0px;">8</span>
<span class="t" style="top:230.7px;color:#000;font-size:11px;left:471.0px;">4</span>
<span class="t" style="left:29.5px;width:40px;text-align:center;top:268px">0.0</span>
<span class="t" style="left:76.0px;width:40px;text-align:center;top:268px">0.5</span>
<span class="t" style="left:122.4px;width:40px;text-align:center;top:268px">1.0</span>
<span class="t" style="left:168.9px;width:40px;text-align:center;top:268px">1.5</span>
<span class="t" style="left:215.3px;width:40px;text-align:center;top:268px">2.0</span>
<span class="t" style="left:261.7px;width:40px;text-align:center;top:268px">2.5</span>
<span class="t" style="left:308.2px;width:40px;text-align:center;top:268px">3.0</span>
<span class="t" style="left:354.6px;width:40px;text-align:center;top:268px">3.5</span>
<span class="t" style="left:401.0px;width:40px;text-align:center;top:268px">4.0</span>
<span class="t" style="left:447.5px;width:40px;text-align:center;top:268px">4.5</span>
<svg style="left:0;top:0" width="645" height="523" viewBox="0 0 645 523"><defs><linearGradient id="g293" x1="0" y1="0" x2="0" y2="1"><stop offset="0" stop-color="#222320"/><stop offset="1" stop-color="#000"/></linearGradient></defs><rect x="46" y="291" width="422" height="137" fill="#000" shape-rendering="crispEdges"/><rect x="48" y="293" width="418" height="134" fill="url(#g293)" shape-rendering="crispEdges"/><rect x="48" y="294" width="418" height="4" fill="#2b2b2a" shape-rendering="crispEdges"/><g shape-rendering="crispEdges"><rect x="57" y="293" width="1" height="134" fill="#0000a8"/><rect x="66" y="293" width="1" height="134" fill="#0000a8"/><rect x="75" y="293" width="1" height="134" fill="#0000a8"/><rect x="85" y="293" width="1" height="134" fill="#0000a8"/><rect x="94" y="293" width="1" height="134" fill="#0000ff"/><rect x="103" y="293" width="1" height="134" fill="#0000a8"/><rect x="113" y="293" width="1" height="134" fill="#0000a8"/><rect x="122" y="293" width="1" height="134" fill="#0000a8"/><rect x="131" y="293" width="1" height="134" fill="#0000a8"/><rect x="140" y="293" width="1" height="134" fill="#0000ff"/><rect x="150" y="293" width="1" height="134" fill="#0000a8"/><rect x="159" y="293" width="1" height="134" fill="#0000a8"/><rect x="168" y="293" width="1" height="134" fill="#0000a8"/><rect x="178" y="293" width="1" height="134" fill="#0000a8"/><rect x="187" y="293" width="1" height="134" fill="#0000ff"/><rect x="196" y="293" width="1" height="134" fill="#0000a8"/><rect x="205" y="293" width="1" height="134" fill="#0000a8"/><rect x="215" y="293" width="1" height="134" fill="#0000a8"/><rect x="224" y="293" width="1" height="134" fill="#0000a8"/><rect x="233" y="293" width="1" height="134" fill="#0000ff"/><rect x="243" y="293" width="1" height="134" fill="#0000a8"/><rect x="252" y="293" width="1" height="134" fill="#0000a8"/><rect x="261" y="293" width="1" height="134" fill="#0000a8"/><rect x="270" y="293" width="1" height="134" fill="#0000a8"/><rect x="280" y="293" width="1" height="134" fill="#0000ff"/><rect x="289" y="293" width="1" height="134" fill="#0000a8"/><rect x="298" y="293" width="1" height="134" fill="#0000a8"/><rect x="308" y="293" width="1" height="134" fill="#0000a8"/><rect x="317" y="293" width="1" height="134" fill="#0000a8"/><rect x="326" y="293" width="1" height="134" fill="#0000ff"/><rect x="335" y="293" width="1" height="134" fill="#0000a8"/><rect x="345" y="293" width="1" height="134" fill="#0000a8"/><rect x="354" y="293" width="1" height="134" fill="#0000a8"/><rect x="363" y="293" width="1" height="134" fill="#0000a8"/><rect x="373" y="293" width="1" height="134" fill="#0000ff"/><rect x="382" y="293" width="1" height="134" fill="#0000a8"/><rect x="391" y="293" width="1" height="134" fill="#0000a8"/><rect x="400" y="293" width="1" height="134" fill="#0000a8"/><rect x="410" y="293" width="1" height="134" fill="#0000a8"/><rect x="419" y="293" width="1" height="134" fill="#0000ff"/><rect x="428" y="293" width="1" height="134" fill="#0000a8"/><rect x="438" y="293" width="1" height="134" fill="#0000a8"/><rect x="447" y="293" width="1" height="134" fill="#0000a8"/><rect x="456" y="293" width="1" height="134" fill="#0000a8"/><rect x="45" y="293" width="425" height="1" fill="#0000ff"/><rect x="46" y="307" width="421" height="1" fill="#0000a8"/><rect x="45" y="320" width="425" height="1" fill="#0000ff"/><rect x="46" y="333" width="421" height="1" fill="#0000a8"/><rect x="45" y="347" width="425" height="1" fill="#0000ff"/><rect x="46" y="360" width="421" height="1" fill="#0000a8"/><rect x="45" y="373" width="425" height="1" fill="#0000ff"/><rect x="46" y="387" width="421" height="1" fill="#0000a8"/><rect x="45" y="400" width="425" height="1" fill="#0000ff"/><rect x="46" y="413" width="421" height="1" fill="#0000a8"/><rect x="45" y="426" width="425" height="1" fill="#0000ff"/><rect x="466" y="293" width="2" height="1" fill="#0000e0"/><rect x="466" y="300" width="2" height="1" fill="#0000e0"/><rect x="466" y="307" width="2" height="1" fill="#0000e0"/><rect x="466" y="313" width="2" height="1" fill="#0000e0"/><rect x="466" y="320" width="2" height="1" fill="#0000e0"/><rect x="466" y="327" width="2" height="1" fill="#0000e0"/><rect x="466" y="333" width="2" height="1" fill="#0000e0"/><rect x="466" y="340" width="2" height="1" fill="#0000e0"/><rect x="466" y="347" width="2" height="1" fill="#0000e0"/><rect x="466" y="353" width="2" height="1" fill="#0000e0"/><rect x="466" y="360" width="2" height="1" fill="#0000e0"/><rect x="466" y="367" width="2" height="1" fill="#0000e0"/><rect x="466" y="373" width="2" height="1" fill="#0000e0"/><rect x="466" y="380" width="2" height="1" fill="#0000e0"/><rect x="466" y="387" width="2" height="1" fill="#0000e0"/><rect x="466" y="393" width="2" height="1" fill="#0000e0"/><rect x="466" y="400" width="2" height="1" fill="#0000e0"/><rect x="466" y="407" width="2" height="1" fill="#0000e0"/><rect x="466" y="413" width="2" height="1" fill="#0000e0"/><rect x="466" y="420" width="2" height="1" fill="#0000e0"/><rect x="466" y="426" width="2" height="1" fill="#0000e0"/></g><g shape-rendering="crispEdges" fill="#00ff00"><rect x="48" y="413" width="1" height="14"/><rect x="60" y="413" width="1" height="14"/><rect x="65" y="413" width="1" height="14"/><rect x="79" y="413" width="1" height="14"/><rect x="85" y="373" width="1" height="54"/><rect x="95" y="387" width="1" height="40"/><rect x="97" y="387" width="1" height="40"/><rect x="100" y="387" width="1" height="40"/><rect x="101" y="387" width="1" height="40"/><rect x="120" y="373" width="1" height="54"/><rect x="146" y="387" width="1" height="40"/><rect x="154" y="413" width="1" height="14"/><rect x="163" y="387" width="1" height="40"/><rect x="174" y="400" width="1" height="27"/><rect x="175" y="413" width="1" height="14"/><rect x="197" y="413" width="1" height="14"/><rect x="216" y="387" width="1" height="40"/><rect x="222" y="413" width="1" height="14"/><rect x="243" y="387" width="1" height="40"/><rect x="246" y="373" width="1" height="54"/><rect x="247" y="387" width="1" height="40"/><rect x="249" y="413" width="1" height="14"/><rect x="252" y="413" width="1" height="14"/><rect x="261" y="373" width="1" height="54"/><rect x="262" y="387" width="1" height="40"/><rect x="271" y="387" width="1" height="40"/><rect x="272" y="387" width="1" height="40"/><rect x="276" y="413" width="1" height="14"/><rect x="287" y="400" width="1" height="27"/><rect x="302" y="413" width="1" height="14"/><rect x="305" y="413" width="1" height="14"/><rect x="316" y="413" width="1" height="14"/><rect x="317" y="387" width="1" height="40"/><rect x="332" y="413" width="1" height="14"/><rect x="342" y="413" width="1" height="14"/><rect x="343" y="413" width="1" height="14"/><rect x="347" y="400" width="1" height="27"/><rect x="349" y="387" width="1" height="40"/><rect x="350" y="400" width="1" height="27"/><rect x="355" y="400" width="1" height="27"/><rect x="372" y="400" width="1" height="27"/><rect x="376" y="400" width="1" height="27"/><rect x="377" y="400" width="1" height="27"/><rect x="382" y="400" width="1" height="27"/><rect x="383" y="400" width="1" height="27"/><rect x="387" y="413" width="1" height="14"/><rect x="394" y="413" width="1" height="14"/><rect x="395" y="400" width="1" height="27"/><rect x="408" y="413" width="1" height="14"/><rect x="411" y="413" width="1" height="14"/><rect x="415" y="400" width="1" height="27"/><rect x="420" y="387" width="1" height="40"/><rect x="429" y="413" width="1" height="14"/><rect x="446" y="413" width="1" height="14"/><rect x="451" y="400" width="1" height="27"/></g><g shape-rendering="crispEdges" fill="#ff14ff"><rect x="48" y="368" width="1" height="1"/><rect x="49" y="368" width="1" height="1"/><rect x="50" y="365" width="1" height="4"/><rect x="51" y="365" width="1" height="6"/><rect x="52" y="366" width="1" height="5"/><rect x="53" y="366" width="1" height="5"/><rect x="54" y="364" width="1" height="7"/><rect x="55" y="364" width="1" height="2"/><rect x="56" y="363" width="1" height="3"/><rect x="57" y="363" width="1" height="5"/><rect x="58" y="365" width="1" height="3"/><rect x="59" y="365" width="1" height="2"/><rect x="60" y="366" width="1" height="2"/><rect x="61" y="365" width="1" height="3"/><rect x="62" y="365" width="1" height="4"/><rect x="63" y="366" width="1" height="3"/><rect x="64" y="364" width="1" height="3"/><rect x="65" y="364" width="1" height="3"/><rect x="66" y="366" width="1" height="1"/><rect x="67" y="362" width="1" height="5"/><rect x="68" y="362" width="1" height="5"/><rect x="69" y="366" width="1" height="2"/><rect x="70" y="365" width="1" height="3"/><rect x="71" y="365" width="1" height="3"/><rect x="72" y="366" width="1" height="2"/><rect x="73" y="366" width="1" height="1"/><rect x="74" y="362" width="1" height="5"/><rect x="75" y="362" width="1" height="5"/><rect x="76" y="365" width="1" height="2"/><rect x="77" y="364" width="1" height="2"/><rect x="78" y="362" width="1" height="3"/><rect x="79" y="362" width="1" height="5"/><rect x="80" y="366" width="1" height="2"/><rect x="81" y="361" width="1" height="7"/><rect x="82" y="361" width="1" height="8"/><rect x="83" y="366" width="1" height="3"/><rect x="84" y="364" width="1" height="3"/><rect x="85" y="362" width="1" height="3"/><rect x="86" y="362" width="1" height="6"/><rect x="87" y="367" width="1" height="4"/><rect x="88" y="364" width="1" height="7"/><rect x="89" y="364" width="1" height="3"/><rect x="90" y="366" width="1" height="1"/><rect x="91" y="365" width="1" height="2"/><rect x="92" y="365" width="1" height="1"/><rect x="93" y="365" width="1" height="1"/><rect x="94" y="365" width="1" height="2"/><rect x="95" y="363" width="1" height="4"/><rect x="96" y="363" width="1" height="1"/><rect x="97" y="363" width="1" height="3"/><rect x="98" y="365" width="1" height="2"/><rect x="99" y="364" width="1" height="3"/><rect x="100" y="364" width="1" height="1"/><rect x="101" y="364" width="1" height="4"/><rect x="102" y="366" width="1" height="2"/><rect x="103" y="363" width="1" height="4"/><rect x="104" y="363" width="1" height="3"/><rect x="105" y="365" width="1" height="2"/><rect x="106" y="365" width="1" height="2"/><rect x="107" y="365" width="1" height="1"/><rect x="108" y="365" width="1" height="1"/><rect x="109" y="365" width="1" height="4"/><rect x="110" y="362" width="1" height="7"/><rect x="111" y="362" width="1" height="4"/><rect x="112" y="365" width="1" height="3"/><rect x="113" y="363" width="1" height="5"/><rect x="114" y="363" width="1" height="2"/><rect x="115" y="364" width="1" height="2"/><rect x="116" y="363" width="1" height="3"/><rect x="117" y="361" width="1" height="3"/><rect x="118" y="361" width="1" height="4"/><rect x="119" y="362" width="1" height="3"/><rect x="120" y="361" width="1" height="2"/><rect x="121" y="361" width="1" height="7"/><rect x="122" y="366" width="1" height="2"/><rect x="123" y="363" width="1" height="4"/><rect x="124" y="363" width="1" height="6"/><rect x="125" y="365" width="1" height="4"/><rect x="126" y="362" width="1" height="4"/><rect x="127" y="362" width="1" height="2"/><rect x="128" y="363" width="1" height="1"/><rect x="129" y="363" width="1" height="6"/><rect x="130" y="360" width="1" height="9"/><rect x="131" y="360" width="1" height="4"/><rect x="132" y="363" width="1" height="1"/><rect x="133" y="363" width="1" height="1"/><rect x="134" y="363" width="1" height="5"/><rect x="135" y="367" width="1" height="1"/><rect x="136" y="366" width="1" height="2"/><rect x="137" y="361" width="1" height="6"/><rect x="138" y="361" width="1" height="6"/><rect x="139" y="364" width="1" height="3"/><rect x="140" y="364" width="1" height="1"/><rect x="141" y="363" width="1" height="2"/><rect x="142" y="363" width="1" height="1"/><rect x="143" y="363" width="1" height="1"/><rect x="144" y="363" width="1" height="4"/><rect x="145" y="366" width="1" height="4"/><rect x="146" y="363" width="1" height="7"/><rect x="147" y="363" width="1" height="1"/><rect x="148" y="362" width="1" height="2"/><rect x="149" y="362" width="1" height="3"/><rect x="150" y="364" width="1" height="2"/><rect x="151" y="363" width="1" height="3"/><rect x="152" y="363" width="1" height="4"/><rect x="153" y="365" width="1" height="2"/><rect x="154" y="365" width="1" height="1"/><rect x="155" y="363" width="1" height="3"/><rect x="156" y="360" width="1" height="4"/><rect x="157" y="360" width="1" height="3"/><rect x="158" y="361" width="1" height="2"/><rect x="159" y="361" width="1" height="3"/><rect x="160" y="363" width="1" height="1"/><rect x="161" y="363" width="1" height="2"/><rect x="162" y="364" width="1" height="1"/><rect x="163" y="364" width="1" height="4"/><rect x="164" y="365" width="1" height="3"/><rect x="165" y="365" width="1" height="1"/><rect x="166" y="362" width="1" height="4"/><rect x="167" y="362" width="1" height="1"/><rect x="168" y="361" width="1" height="2"/><rect x="169" y="360" width="1" height="2"/><rect x="170" y="360" width="1" height="4"/><rect x="171" y="361" width="1" height="3"/><rect x="172" y="359" width="1" height="3"/><rect x="173" y="359" width="1" height="5"/><rect x="174" y="361" width="1" height="3"/><rect x="175" y="361" width="1" height="3"/><rect x="176" y="363" width="1" height="4"/><rect x="177" y="363" width="1" height="4"/><rect x="178" y="363" width="1" height="2"/><rect x="179" y="362" width="1" height="3"/><rect x="180" y="362" width="1" height="2"/><rect x="181" y="362" width="1" height="2"/><rect x="182" y="362" width="1" height="5"/><rect x="183" y="359" width="1" height="8"/><rect x="184" y="359" width="1" height="2"/><rect x="185" y="360" width="1" height="4"/><rect x="186" y="363" width="1" height="2"/><rect x="187" y="362" width="1" height="3"/><rect x="188" y="361" width="1" height="2"/><rect x="189" y="361" width="1" height="2"/><rect x="190" y="362" width="1" height="1"/><rect x="191" y="362" width="1" height="5"/><rect x="192" y="364" width="1" height="3"/><rect x="193" y="360" width="1" height="5"/><rect x="194" y="360" width="1" height="3"/><rect x="195" y="362" width="1" height="4"/><rect x="196" y="364" width="1" height="2"/><rect x="197" y="364" width="1" height="2"/><rect x="198" y="364" width="1" height="2"/><rect x="199" y="360" width="1" height="5"/><rect x="200" y="360" width="1" height="4"/><rect x="201" y="360" width="1" height="4"/><rect x="202" y="360" width="1" height="3"/><rect x="203" y="362" width="1" height="4"/><rect x="204" y="363" width="1" height="3"/><rect x="205" y="358" width="1" height="6"/><rect x="206" y="358" width="1" height="6"/><rect x="207" y="363" width="1" height="2"/><rect x="208" y="360" width="1" height="5"/><rect x="209" y="360" width="1" height="3"/><rect x="210" y="362" width="1" height="1"/><rect x="211" y="359" width="1" height="4"/><rect x="212" y="359" width="1" height="7"/><rect x="213" y="361" width="1" height="5"/><rect x="214" y="361" width="1" height="4"/><rect x="215" y="364" width="1" height="1"/><rect x="216" y="363" width="1" height="2"/><rect x="217" y="360" width="1" height="4"/><rect x="218" y="360" width="1" height="3"/><rect x="219" y="362" width="1" height="4"/><rect x="220" y="364" width="1" height="2"/><rect x="221" y="359" width="1" height="6"/><rect x="222" y="359" width="1" height="2"/><rect x="223" y="360" width="1" height="5"/><rect x="224" y="358" width="1" height="7"/><rect x="225" y="358" width="1" height="6"/><rect x="226" y="363" width="1" height="2"/><rect x="227" y="362" width="1" height="3"/><rect x="228" y="360" width="1" height="3"/><rect x="229" y="359" width="1" height="2"/><rect x="230" y="359" width="1" height="2"/><rect x="231" y="360" width="1" height="4"/><rect x="232" y="363" width="1" height="1"/><rect x="233" y="363" width="1" height="2"/><rect x="234" y="362" width="1" height="3"/><rect x="235" y="362" width="1" height="2"/><rect x="236" y="361" width="1" height="3"/><rect x="237" y="361" width="1" height="4"/><rect x="238" y="363" width="1" height="2"/><rect x="239" y="363" width="1" height="1"/><rect x="240" y="363" width="1" height="2"/><rect x="241" y="364" width="1" height="1"/><rect x="242" y="363" width="1" height="2"/><rect x="243" y="363" width="1" height="2"/><rect x="244" y="361" width="1" height="4"/><rect x="245" y="361" width="1" height="1"/><rect x="246" y="361" width="1" height="4"/><rect x="247" y="361" width="1" height="4"/><rect x="248" y="361" width="1" height="1"/><rect x="249" y="359" width="1" height="3"/><rect x="250" y="359" width="1" height="4"/><rect x="251" y="362" width="1" height="1"/><rect x="252" y="362" width="1" height="2"/><rect x="253" y="361" width="1" height="3"/><rect x="254" y="361" width="1" height="1"/><rect x="255" y="361" width="1" height="1"/><rect x="256" y="361" width="1" height="2"/><rect x="257" y="361" width="1" height="2"/><rect x="258" y="361" width="1" height="1"/><rect x="259" y="361" width="1" height="1"/><rect x="260" y="361" width="1" height="3"/><rect x="261" y="361" width="1" height="3"/><rect x="262" y="361" width="1" height="3"/><rect x="263" y="363" width="1" height="1"/><rect x="264" y="361" width="1" height="3"/><rect x="265" y="358" width="1" height="4"/><rect x="266" y="358" width="1" height="3"/><rect x="267" y="360" width="1" height="2"/><rect x="268" y="361" width="1" height="2"/><rect x="269" y="360" width="1" height="3"/><rect x="270" y="359" width="1" height="2"/><rect x="271" y="359" width="1" height="1"/><rect x="272" y="359" width="1" height="4"/><rect x="273" y="361" width="1" height="2"/><rect x="274" y="361" width="1" height="2"/><rect x="275" y="362" width="1" height="1"/><rect x="276" y="362" width="1" height="2"/><rect x="277" y="361" width="1" height="3"/><rect x="278" y="361" width="1" height="5"/><rect x="279" y="363" width="1" height="3"/><rect x="280" y="360" width="1" height="4"/><rect x="281" y="360" width="1" height="3"/><rect x="282" y="360" width="1" height="3"/><rect x="283" y="360" width="1" height="4"/><rect x="284" y="361" width="1" height="3"/><rect x="285" y="360" width="1" height="2"/><rect x="286" y="360" width="1" height="3"/><rect x="287" y="362" width="1" height="1"/><rect x="288" y="356" width="1" height="7"/><rect x="289" y="356" width="1" height="7"/><rect x="290" y="362" width="1" height="1"/><rect x="291" y="361" width="1" height="2"/><rect x="292" y="360" width="1" height="2"/><rect x="293" y="360" width="1" height="1"/><rect x="294" y="358" width="1" height="3"/><rect x="295" y="358" width="1" height="2"/><rect x="296" y="359" width="1" height="3"/><rect x="297" y="361" width="1" height="1"/><rect x="298" y="361" width="1" height="2"/><rect x="299" y="362" width="1" height="2"/><rect x="300" y="361" width="1" height="3"/><rect x="301" y="358" width="1" height="4"/><rect x="302" y="358" width="1" height="2"/><rect x="303" y="358" width="1" height="2"/><rect x="304" y="358" width="1" height="1"/><rect x="305" y="358" width="1" height="3"/><rect x="306" y="356" width="1" height="5"/><rect x="307" y="356" width="1" height="5"/><rect x="308" y="360" width="1" height="1"/><rect x="309" y="360" width="1" height="1"/><rect x="310" y="357" width="1" height="4"/><rect x="311" y="357" width="1" height="3"/><rect x="312" y="359" width="1" height="2"/><rect x="313" y="358" width="1" height="3"/><rect x="314" y="357" width="1" height="2"/><rect x="315" y="357" width="1" height="3"/><rect x="316" y="357" width="1" height="3"/><rect x="317" y="352" width="1" height="6"/><rect x="318" y="351" width="1" height="2"/><rect x="319" y="351" width="1" height="1"/><rect x="320" y="351" width="1" height="4"/><rect x="321" y="352" width="1" height="3"/><rect x="322" y="352" width="1" height="1"/><rect x="323" y="352" width="1" height="4"/><rect x="324" y="350" width="1" height="6"/><rect x="325" y="350" width="1" height="3"/><rect x="326" y="352" width="1" height="2"/><rect x="327" y="348" width="1" height="6"/><rect x="328" y="348" width="1" height="4"/><rect x="329" y="351" width="1" height="3"/><rect x="330" y="352" width="1" height="2"/><rect x="331" y="351" width="1" height="2"/><rect x="332" y="350" width="1" height="2"/><rect x="333" y="350" width="1" height="3"/><rect x="334" y="352" width="1" height="2"/><rect x="335" y="353" width="1" height="1"/><rect x="336" y="353" width="1" height="2"/><rect x="337" y="354" width="1" height="1"/><rect x="338" y="352" width="1" height="3"/><rect x="339" y="352" width="1" height="2"/><rect x="340" y="352" width="1" height="2"/><rect x="341" y="352" width="1" height="3"/><rect x="342" y="354" width="1" height="1"/><rect x="343" y="353" width="1" height="2"/><rect x="344" y="353" width="1" height="2"/><rect x="345" y="351" width="1" height="4"/><rect x="346" y="351" width="1" height="5"/><rect x="347" y="353" width="1" height="3"/><rect x="348" y="353" width="1" height="1"/><rect x="349" y="353" width="1" height="4"/><rect x="350" y="352" width="1" height="5"/><rect x="351" y="352" width="1" height="2"/><rect x="352" y="353" width="1" height="5"/><rect x="353" y="353" width="1" height="5"/><rect x="354" y="352" width="1" height="2"/><rect x="355" y="352" width="1" height="4"/><rect x="356" y="351" width="1" height="5"/><rect x="357" y="351" width="1" height="4"/><rect x="358" y="354" width="1" height="3"/><rect x="359" y="353" width="1" height="4"/><rect x="360" y="353" width="1" height="3"/><rect x="361" y="355" width="1" height="3"/><rect x="362" y="357" width="1" height="2"/><rect x="363" y="354" width="1" height="5"/><rect x="364" y="354" width="1" height="3"/><rect x="365" y="354" width="1" height="3"/><rect x="366" y="354" width="1" height="1"/><rect x="367" y="354" width="1" height="3"/><rect x="368" y="356" width="1" height="1"/><rect x="369" y="352" width="1" height="5"/><rect x="370" y="352" width="1" height="1"/><rect x="371" y="352" width="1" height="3"/><rect x="372" y="354" width="1" height="3"/><rect x="373" y="356" width="1" height="2"/><rect x="374" y="356" width="1" height="2"/><rect x="375" y="353" width="1" height="4"/><rect x="376" y="353" width="1" height="3"/><rect x="377" y="355" width="1" height="2"/><rect x="378" y="356" width="1" height="3"/><rect x="379" y="356" width="1" height="3"/><rect x="380" y="356" width="1" height="3"/><rect x="381" y="356" width="1" height="3"/><rect x="382" y="355" width="1" height="2"/><rect x="383" y="354" width="1" height="2"/><rect x="384" y="354" width="1" height="3"/><rect x="385" y="356" width="1" height="2"/><rect x="386" y="356" width="1" height="2"/><rect x="387" y="353" width="1" height="4"/><rect x="388" y="353" width="1" height="4"/><rect x="389" y="356" width="1" height="4"/><rect x="390" y="354" width="1" height="6"/><rect x="391" y="354" width="1" height="3"/><rect x="392" y="351" width="1" height="6"/><rect x="393" y="351" width="1" height="8"/><rect x="394" y="357" width="1" height="2"/><rect x="395" y="357" width="1" height="2"/><rect x="396" y="356" width="1" height="3"/><rect x="397" y="356" width="1" height="3"/><rect x="398" y="358" width="1" height="3"/><rect x="399" y="360" width="1" height="2"/><rect x="400" y="357" width="1" height="5"/><rect x="401" y="357" width="1" height="2"/><rect x="402" y="358" width="1" height="1"/><rect x="403" y="354" width="1" height="5"/><rect x="404" y="354" width="1" height="3"/><rect x="405" y="355" width="1" height="2"/><rect x="406" y="355" width="1" height="4"/><rect x="407" y="357" width="1" height="2"/><rect x="408" y="357" width="1" height="2"/><rect x="409" y="358" width="1" height="1"/><rect x="410" y="356" width="1" height="3"/><rect x="411" y="356" width="1" height="2"/><rect x="412" y="357" width="1" height="1"/><rect x="413" y="357" width="1" height="1"/><rect x="414" y="357" width="1" height="4"/><rect x="415" y="359" width="1" height="2"/><rect x="416" y="357" width="1" height="3"/><rect x="417" y="357" width="1" height="2"/><rect x="418" y="358" width="1" height="2"/><rect x="419" y="357" width="1" height="3"/><rect x="420" y="357" width="1" height="4"/><rect x="421" y="359" width="1" height="2"/><rect x="422" y="356" width="1" height="4"/><rect x="423" y="356" width="1" height="4"/><rect x="424" y="356" width="1" height="4"/><rect x="425" y="356" width="1" height="2"/><rect x="426" y="357" width="1" height="1"/><rect x="427" y="356" width="1" height="2"/><rect x="428" y="356" width="1" height="7"/><rect x="429" y="358" width="1" height="5"/><rect x="430" y="358" width="1" height="4"/><rect x="431" y="359" width="1" height="3"/><rect x="432" y="359" width="1" height="1"/><rect x="433" y="356" width="1" height="4"/><rect x="434" y="356" width="1" height="4"/><rect x="435" y="356" width="1" height="4"/><rect x="436" y="356" width="1" height="5"/><rect x="437" y="359" width="1" height="2"/><rect x="438" y="359" width="1" height="1"/><rect x="439" y="357" width="1" height="3"/><rect x="440" y="357" width="1" height="3"/><rect x="441" y="359" width="1" height="2"/><rect x="442" y="359" width="1" height="2"/><rect x="443" y="359" width="1" height="3"/><rect x="444" y="357" width="1" height="5"/><rect x="445" y="357" width="1" height="2"/><rect x="446" y="358" width="1" height="1"/><rect x="447" y="358" width="1" height="2"/><rect x="448" y="359" width="1" height="2"/><rect x="449" y="360" width="1" height="1"/><rect x="450" y="358" width="1" height="3"/><rect x="451" y="358" width="1" height="4"/><rect x="452" y="361" width="1" height="1"/><rect x="453" y="357" width="1" height="5"/></g><rect x="454" y="293" width="1" height="134" fill="#e0e0e0" shape-rendering="crispEdges"/></svg>
<span class="t" style="top:285.7px;color:#000;font-size:11px;right:603.0px;">10</span>
<span class="t" style="top:312.7px;color:#000;font-size:11px;right:603.0px;">8</span>
<span class="t" style="top:339.7px;color:#000;font-size:11px;right:603.0px;">6</span>
<span class="t" style="top:365.7px;color:#000;font-size:11px;right:603.0px;">4</span>
<span class="t" style="top:392.7px;color:#000;font-size:11px;right:603.0px;">2</span>
<span class="t" style="top:285.7px;color:#000;font-size:11px;left:471.0px;">20</span>
<span class="t" style="top:312.7px;color:#000;font-size:11px;left:471.0px;">16</span>
<span class="t" style="top:339.7px;color:#000;font-size:11px;left:471.0px;">12</span>
<span class="t" style="top:365.7px;color:#000;font-size:11px;left:471.0px;">8</span>
<span class="t" style="top:392.7px;color:#000;font-size:11px;left:471.0px;">4</span>
<span class="t" style="left:29.5px;width:40px;text-align:center;top:430px">0.0</span>
<span class="t" style="left:76.0px;width:40px;text-align:center;top:430px">0.5</span>
<span class="t" style="left:122.4px;width:40px;text-align:center;top:430px">1.0</span>
<span class="t" style="left:168.9px;width:40px;text-align:center;top:430px">1.5</span>
<span class="t" style="left:215.3px;width:40px;text-align:center;top:430px">2.0</span>
<span class="t" style="left:261.7px;width:40px;text-align:center;top:430px">2.5</span>
<span class="t" style="left:308.2px;width:40px;text-align:center;top:430px">3.0</span>
<span class="t" style="left:354.6px;width:40px;text-align:center;top:430px">3.5</span>
<span class="t" style="left:401.0px;width:40px;text-align:center;top:430px">4.0</span>
<span class="t" style="left:447.5px;width:40px;text-align:center;top:430px">4.5</span>
<div style="left:491px;top:124px;width:137px;height:82px;border:1px solid #808080;box-shadow:1px 1px 0 #fff, inset 1px 1px 0 #fff;"></div>
<div style="left:498px;top:124px;width:46px;height:2px;background:#d4d0c8;"></div>
<span class="t" style="top:119.7px;color:#000;font-size:11px;letter-spacing:0.00px;left:499.9px;">Disc info</span>
<span class="t" style="top:133.7px;color:#000;font-size:11px;left:499.4px;transform:scaleX(0.976);transform-origin:0 0;">Type:</span>
<span class="t" style="top:133.7px;color:#00008c;font-size:11px;left:545.0px;transform:scaleX(0.992);transform-origin:0 0;">DVD+R</span>
<span class="t" style="top:149.7px;color:#000;font-size:11px;left:499.4px;transform:scaleX(0.949);transform-origin:0 0;">ID:</span>
<span class="t" style="top:149.7px;color:#00008c;font-size:11px;letter-spacing:0.03px;left:545.0px;">YUDEN000 T03</span>
<span class="t" style="top:167.7px;color:#000;font-size:11px;left:499.4px;transform:scaleX(0.980);transform-origin:0 0;">Date:</span>
<span class="t" style="top:167.7px;color:#00008c;font-size:11px;letter-spacing:1.29px;left:545.0px;">n/a</span>
<span class="t" style="top:185.7px;color:#000;font-size:11px;left:499.4px;transform:scaleX(0.959);transform-origin:0 0;">Label:</span>
<span class="t" style="top:185.7px;color:#00008c;font-size:11px;letter-spacing:1.29px;left:545.0px;">n/a</span>
<div style="left:491px;top:215px;width:137px;height:202px;border:1px solid #808080;box-shadow:1px 1px 0 #fff, inset 1px 1px 0 #fff;"></div>
<div style="left:498px;top:215px;width:43px;height:2px;background:#d4d0c8;"></div>
<span class="t" style="top:210.7px;color:#000;font-size:11px;left:499.9px;transform:scaleX(0.977);transform-origin:0 0;">Settings</span>
<div style="left:500px;top:225px;width:84px;height:21px;background:#fff;box-shadow:inset 1px 1px 0 #808080, inset -1px -1px 0 #fff, inset 2px 2px 0 #404040, inset -2px -2px 0 #d4d0c8;"></div>
<span class="t" style="top:229.7px;color:#000;font-size:11px;letter-spacing:0.13px;left:503.9px;">8 X</span>
<div style="left:566px;top:227px;width:16px;height:17px;background:#d4d0c8;box-shadow:inset -1px -1px 0 #404040, inset 1px 1px 0 #fff, inset -2px -2px 0 #808080, inset 2px 2px 0 #d4d0c8;"></div>
<svg style="left:566px;top:227px" width="16" height="17" viewBox="0 0 16 17" shape-rendering="crispEdges"><path d="M4 7h7l-3.5 4z" fill="#000"/></svg>
<div style="left:592px;top:224px;width:23px;height:23px;background:#d4d0c8;box-shadow:inset -1px -1px 0 #404040, inset 1px 1px 0 #fff, inset -2px -2px 0 #808080, inset 2px 2px 0 #d4d0c8;"></div>
<div style="left:596px;top:227px;width:14px;height:16px;background:#000;"></div>
<div style="left:597px;top:228px;width:12px;height:14px;background:#fafffa;"></div>
<svg style="left:597px;top:228px" width="12" height="14" viewBox="0 0 12 14"><g fill="none" stroke="#008c00" stroke-width="1.1"><path d="M2 7V4.600Q2 4.100 2.500 4.100H5.500"/><path d="M10 7.400V9.900Q10 10.400 9.500 10.400H6.500"/></g><path d="M5.200 1.700l2.700 2.400-2.700 2.400z" fill="#008c00"/><path d="M6.800 8l-2.700 2.400 2.700 2.400z" fill="#008c00"/></svg>
<span class="t" style="top:255.7px;color:#000;font-size:11px;left:501.9px;transform:scaleX(0.960);transform-origin:0 0;">Start:</span>
<div style="left:554px;top:251px;width:60px;height:19px;background:#fff;box-shadow:inset 1px 1px 0 #808080, inset -1px -1px 0 #fff, inset 2px 2px 0 #404040, inset -2px -2px 0 #d4d0c8;"></div>
<span class="t" style="top:254.7px;color:#000;font-size:11px;left:557.2px;transform:scaleX(0.973);transform-origin:0 0;">0000 MB</span>
<span class="t" style="top:278.7px;color:#000;font-size:11px;left:501.9px;transform:scaleX(0.974);transform-origin:0 0;">End:</span>
<div style="left:554px;top:274px;width:60px;height:19px;background:#fff;box-shadow:inset 1px 1px 0 #808080, inset -1px -1px 0 #fff, inset 2px 2px 0 #404040, inset -2px -2px 0 #d4d0c8;"></div>
<span class="t" style="top:277.7px;color:#000;font-size:11px;left:557.2px;transform:scaleX(0.973);transform-origin:0 0;">4480 MB</span>
<div style="left:502px;top:296px;width:13px;height:13px;background:#fff;box-shadow:inset 1px 1px 0 #808080, inset -1px -1px 0 #fff, inset 2px 2px 0 #404040, inset -2px -2px 0 #d4d0c8;"></div>
<span class="t" style="top:295.7px;color:#000;font-size:11px;left:520.0px;transform:scaleX(0.997);transform-origin:0 0;">Quick scan</span>
<div style="left:502px;top:314px;width:13px;height:13px;background:#fff;box-shadow:inset 1px 1px 0 #808080, inset -1px -1px 0 #fff, inset 2px 2px 0 #404040, inset -2px -2px 0 #d4d0c8;"></div>
<svg style="left:505px;top:317px" width="7" height="7" viewBox="0 0 7 7" shape-rendering="crispEdges"><path d="M0 2h1v1h1v1h1v-1h1v-1h1v-1h1v-1h1v3h-1v1h-1v1h-1v1h-1v1h-1v-1h-1v-1h-1z" fill="#000"/></svg>
<span class="t" style="top:313.7px;color:#000;font-size:11px;left:520.0px;transform:scaleX(0.982);transform-origin:0 0;">Show C1/PIE</span>
<div style="left:502px;top:329px;width:13px;height:13px;background:#fff;box-shadow:inset 1px 1px 0 #808080, inset -1px -1px 0 #fff, inset 2px 2px 0 #404040, inset -2px -2px 0 #d4d0c8;"></div>
<svg style="left:505px;top:332px" width="7" height="7" viewBox="0 0 7 7" shape-rendering="crispEdges"><path d="M0 2h1v1h1v1h1v-1h1v-1h1v-1h1v-1h1v3h-1v1h-1v1h-1v1h-1v1h-1v-1h-1v-1h-1z" fill="#000"/></svg>
<span class="t" style="top:328.7px;color:#000;font-size:11px;left:520.0px;transform:scaleX(0.984);transform-origin:0 0;">Show C2/PIF</span>
<div style="left:502px;top:345px;width:13px;height:13px;background:#fff;box-shadow:inset 1px 1px 0 #808080, inset -1px -1px 0 #fff, inset 2px 2px 0 #404040, inset -2px -2px 0 #d4d0c8;"></div>
<svg style="left:505px;top:348px" width="7" height="7" viewBox="0 0 7 7" shape-rendering="crispEdges"><path d="M0 2h1v1h1v1h1v-1h1v-1h1v-1h1v-1h1v3h-1v1h-1v1h-1v1h-1v1h-1v-1h-1v-1h-1z" fill="#000"/></svg>
<span class="t" style="top:344.7px;color:#000;font-size:11px;left:520.0px;transform:scaleX(0.961);transform-origin:0 0;">Show jitter</span>
<div style="left:502px;top:361px;width:13px;height:13px;background:#fff;box-shadow:inset 1px 1px 0 #808080, inset -1px -1px 0 #fff, inset 2px 2px 0 #404040, inset -2px -2px 0 #d4d0c8;"></div>
<svg style="left:505px;top:364px" width="7" height="7" viewBox="0 0 7 7" shape-rendering="crispEdges"><path d="M0 2h1v1h1v1h1v-1h1v-1h1v-1h1v-1h1v3h-1v1h-1v1h-1v1h-1v1h-1v-1h-1v-1h-1z" fill="#000"/></svg>
<span class="t" style="top:360.7px;color:#000;font-size:11px;left:520.0px;transform:scaleX(0.973);transform-origin:0 0;">Show read speed</span>
<div style="left:502px;top:376px;width:13px;height:13px;background:#d4d0c8;box-shadow:inset 1px 1px 0 #808080, inset -1px -1px 0 #fff, inset 2px 2px 0 #404040, inset -2px -2px 0 #d4d0c8;"></div>
<svg style="left:505px;top:379px" width="7" height="7" viewBox="0 0 7 7" shape-rendering="crispEdges"><path d="M0 2h1v1h1v1h1v-1h1v-1h1v-1h1v-1h1v3h-1v1h-1v1h-1v1h-1v1h-1v-1h-1v-1h-1z" fill="#808080"/></svg>
<span class="t" style="top:376.7px;color:#fff;font-size:11px;left:521.0px;transform:scaleX(0.974);transform-origin:0 0;">Show write speed</span>
<span class="t" style="top:375.7px;color:#808080;font-size:11px;left:520.0px;transform:scaleX(0.974);transform-origin:0 0;">Show write speed</span>
<div style="left:527px;top:393px;width:98px;height:23px;background:#d4d0c8;box-shadow:inset -1px -1px 0 #404040, inset 1px 1px 0 #fff, inset -2px -2px 0 #808080, inset 2px 2px 0 #d4d0c8;"></div>
<span class="t" style="top:396.7px;color:#000;font-size:11px;letter-spacing:0.16px;left:550.8px;">Advanced</span>
<div style="left:491px;top:425px;width:137px;height:24px;border:1px solid #808080;box-shadow:1px 1px 0 #fff, inset 1px 1px 0 #fff;"></div>
<span class="t" style="top:431.7px;color:#000;font-size:11px;left:501.9px;transform:scaleX(0.954);transform-origin:0 0;">Quality score:</span>
<span class="t" style="top:431.7px;color:#00008c;font-size:11px;letter-spacing:0.85px;left:608.1px;">98</span>
<div style="left:491px;top:457px;width:137px;height:54px;border:1px solid #808080;box-shadow:1px 1px 0 #fff, inset 1px 1px 0 #fff;"></div>
<svg style="left:580px;top:464px" width="40" height="40" viewBox="-20 -20 40 40"><defs><radialGradient id="cdg" cx="0" cy="0" r="19" gradientUnits="userSpaceOnUse"><stop offset="0" stop-color="#d2d0ca"/><stop offset=".3" stop-color="#cbc9c3"/><stop offset=".85" stop-color="#c3c1bb"/><stop offset="1" stop-color="#b4b2ac"/></radialGradient></defs><circle cx="0" cy="0" r="18.8" fill="url(#cdg)"/><circle cx="0" cy="0" r="18.3" fill="none" stroke="#b0aea8" stroke-width="1" opacity=".6"/><path d="M0 0L-17 -8A18.800 18.800 0 0 1 -6 -17.800z" fill="#e2e0da" opacity=".8"/><path d="M0 0L17 8A18.800 18.800 0 0 1 6 17.800z" fill="#dad8d2" opacity=".7"/><path d="M13.300 13.300A18.800 18.800 0 0 0 18.800 0" fill="none" stroke="#a8a6a0" stroke-width="1.200" opacity=".7"/><circle cx="0" cy="0" r="6.500" fill="#d6d4ce"/><circle cx="0" cy="0" r="6.500" fill="none" stroke="#bcbab4" stroke-width=".8"/><circle cx="0" cy="0" r="2.300" fill="#e4e2dc"/></svg>
<span class="t" style="top:465.7px;color:#000;font-size:11px;left:501.9px;transform:scaleX(0.931);transform-origin:0 0;">Progress:</span>
<span class="t" style="top:465.7px;color:#00008c;font-size:11px;left:592.4px;transform:scaleX(0.946);transform-origin:0 0;">100 %</span>
<span class="t" style="top:481.7px;color:#000;font-size:11px;left:501.9px;transform:scaleX(0.951);transform-origin:0 0;">Position:</span>
<span class="t" style="top:481.7px;color:#00008c;font-size:11px;left:578.3px;transform:scaleX(0.973);transform-origin:0 0;">4479 MB</span>
<span class="t" style="top:497.7px;color:#000;font-size:11px;left:501.9px;transform:scaleX(0.973);transform-origin:0 0;">Speed:</span>
<span class="t" style="top:497.7px;color:#00008c;font-size:11px;letter-spacing:0.03px;left:590.0px;">8.32 X</span>
<div style="left:14px;top:457px;width:144px;height:55px;border:1px solid #808080;box-shadow:1px 1px 0 #fff, inset 1px 1px 0 #fff;"></div>
<div style="left:22px;top:457px;width:56px;height:2px;background:#d4d0c8;"></div>
<div style="left:24px;top:454px;width:8px;height:8px;background:#000;"></div>
<div style="left:25px;top:455px;width:6px;height:6px;background:#00ffff;"></div>
<span class="t" style="top:451.7px;color:#000;font-size:11px;left:35.0px;transform:scaleX(0.936);transform-origin:0 0;">PI Errors</span>
<span class="t" style="top:466.7px;color:#000;font-size:11px;left:21.4px;transform:scaleX(0.996);transform-origin:0 0;">Average:</span>
<span class="t" style="top:466.7px;color:#00008c;font-size:11px;letter-spacing:0.05px;left:129.1px;">5.32</span>
<span class="t" style="top:481.7px;color:#000;font-size:11px;left:21.9px;transform:scaleX(0.923);transform-origin:0 0;">Maximum:</span>
<span class="t" style="top:481.7px;color:#00008c;font-size:11px;left:138.5px;transform:scaleX(0.996);transform-origin:0 0;">23</span>
<span class="t" style="top:496.7px;color:#000;font-size:11px;letter-spacing:0.04px;left:22.4px;">Total:</span>
<span class="t" style="top:496.7px;color:#00008c;font-size:11px;left:120.4px;transform:scaleX(0.989);transform-origin:0 0;">95385</span>
<div style="left:172px;top:457px;width:144px;height:55px;border:1px solid #808080;box-shadow:1px 1px 0 #fff, inset 1px 1px 0 #fff;"></div>
<div style="left:180px;top:457px;width:65px;height:2px;background:#d4d0c8;"></div>
<div style="left:182px;top:454px;width:8px;height:8px;background:#000;"></div>
<div style="left:183px;top:455px;width:6px;height:6px;background:#ffff00;"></div>
<span class="t" style="top:451.7px;color:#000;font-size:11px;left:193.0px;transform:scaleX(0.948);transform-origin:0 0;">PI Failures</span>
<span class="t" style="top:466.7px;color:#000;font-size:11px;left:180.6px;transform:scaleX(0.985);transform-origin:0 0;">Average:</span>
<span class="t" style="top:466.7px;color:#00008c;font-size:11px;left:288.1px;transform:scaleX(0.993);transform-origin:0 0;">0.00</span>
<span class="t" style="top:481.7px;color:#000;font-size:11px;left:181.1px;transform:scaleX(0.913);transform-origin:0 0;">Maximum:</span>
<span class="t" style="top:481.7px;color:#00008c;font-size:11px;left:303.5px;transform:scaleX(0.956);transform-origin:0 0;">4</span>
<span class="t" style="top:496.7px;color:#000;font-size:11px;letter-spacing:0.10px;left:181.4px;">Total:</span>
<span class="t" style="top:496.7px;color:#00008c;font-size:11px;left:291.5px;transform:scaleX(0.973);transform-origin:0 0;">467</span>
<div style="left:331px;top:457px;width:145px;height:41px;border:1px solid #808080;box-shadow:1px 1px 0 #fff, inset 1px 1px 0 #fff;"></div>
<div style="left:339px;top:457px;width:38px;height:2px;background:#d4d0c8;"></div>
<div style="left:341px;top:454px;width:8px;height:8px;background:#000;"></div>
<div style="left:342px;top:455px;width:6px;height:6px;background:#ff00ff;"></div>
<span class="t" style="top:451.7px;color:#000;font-size:11px;left:351.3px;transform:scaleX(0.976);transform-origin:0 0;">Jitter</span>
<span class="t" style="top:467.7px;color:#000;font-size:11px;left:339.9px;transform:scaleX(0.985);transform-origin:0 0;">Average:</span>
<span class="t" style="top:467.7px;color:#00008c;font-size:11px;left:436.2px;transform:scaleX(0.952);transform-origin:0 0;">9.64 %</span>
<span class="t" style="top:482.7px;color:#000;font-size:11px;left:340.1px;transform:scaleX(0.919);transform-origin:0 0;">Maximum:</span>
<span class="t" style="top:482.7px;color:#00008c;font-size:11px;left:435.4px;transform:scaleX(0.979);transform-origin:0 0;">11.5 %</span>
<span class="t" style="top:501.7px;color:#000;font-size:11px;left:340.1px;transform:scaleX(0.931);transform-origin:0 0;">PO failures:</span>
<span class="t" style="top:501.7px;color:#00008c;font-size:11px;left:462.1px;transform:scaleX(1.112);transform-origin:0 0;">0</span>
<span class="t" style="left:560.5px;top:505.9px;font-size:18px;font-weight:bold;line-height:18px;color:#fff;-webkit-text-stroke:.9px #fff;opacity:.4;transform:scaleX(.615);transform-origin:0 0">CDRLABS.COM</span>
</div></body></html>
